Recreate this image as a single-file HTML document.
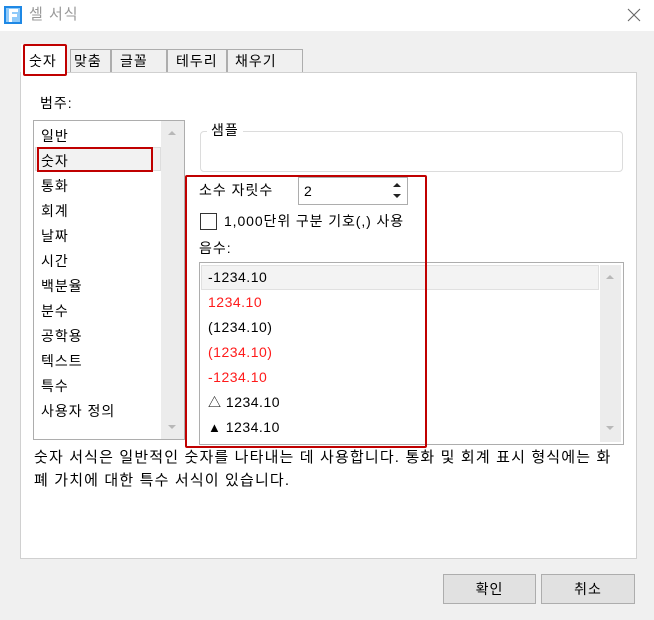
<!DOCTYPE html><html><head><meta charset="utf-8"><style>
*{margin:0;padding:0;box-sizing:border-box}
body{width:654px;height:620px;background:#f0f0f0;position:relative;overflow:hidden;font-family:"Liberation Sans","Noto Sans CJK KR",sans-serif;font-size:14px;color:#000;letter-spacing:1px}
.a{position:absolute;white-space:nowrap}
.t{line-height:20px}
</style></head><body>
<div class="a" style="left:0;top:0;width:654px;height:31px;background:#fff"></div>
<svg class="a" style="left:4px;top:6px" width="18" height="18"><rect x="0" y="0" width="18" height="18" fill="#1e88e5"/><rect x="2" y="2" width="14" height="14" fill="#90caf9"/><path d="M5 3h9v3H8v2h5v3H8v5H5z" fill="#fff"/></svg>
<div class="a t" style="left:29px;top:5px;color:#999;font-size:15px">셀 서식</div>
<svg class="a" style="left:627px;top:8px" width="14" height="14"><path d="M1 1L13 13M13 1L1 13" stroke="#666" stroke-width="1.1"/></svg>
<div class="a" style="left:70px;top:49px;width:41px;height:24px;border:1px solid #adadad;background:#f0f0f0"></div>
<div class="a t" style="left:74px;top:51px">맞춤</div>
<div class="a" style="left:111px;top:49px;width:56px;height:24px;border:1px solid #adadad;background:#f0f0f0"></div>
<div class="a t" style="left:120px;top:51px">글꼴</div>
<div class="a" style="left:167px;top:49px;width:60px;height:24px;border:1px solid #adadad;background:#f0f0f0"></div>
<div class="a t" style="left:176px;top:51px">테두리</div>
<div class="a" style="left:227px;top:49px;width:76px;height:24px;border:1px solid #adadad;background:#f0f0f0"></div>
<div class="a t" style="left:235px;top:51px">채우기</div>
<div class="a" style="left:20px;top:72px;width:617px;height:487px;background:#fff;border:1px solid #d0d0d0"></div>
<div class="a" style="left:21px;top:44px;width:46px;height:30px;background:#fff"></div>
<div class="a" style="left:23px;top:44px;width:44px;height:32px;border:2px solid #c00000;border-radius:2px"></div>
<div class="a t" style="left:29px;top:51px">숫자</div>
<div class="a t" style="left:40px;top:93px">범주:</div>
<div class="a" style="left:33px;top:120px;width:152px;height:320px;border:1px solid #adadad;background:#fff"></div>
<div class="a" style="left:161px;top:121px;width:23px;height:318px;background:#ececec"></div>
<svg class="a" style="left:166px;top:128px" width="12" height="8"><path d="M2 7L6 3L10 7z" fill="#b8b8b8"/></svg>
<svg class="a" style="left:166px;top:424px" width="12" height="8"><path d="M2 1L6 5L10 1z" fill="#b8b8b8"/></svg>
<div class="a" style="left:35px;top:147px;width:126px;height:24px;background:#f2f2f2;border:1px solid #ddd"></div>
<div class="a" style="left:37px;top:147px;width:116px;height:25px;border:2px solid #c00000"></div>
<div class="a t" style="left:41px;top:124px;line-height:25px">일반<br>숫자<br>통화<br>회계<br>날짜<br>시간<br>백분율<br>분수<br>공학용<br>텍스트<br>특수<br>사용자 정의</div>
<div class="a" style="left:200px;top:131px;width:423px;height:41px;border:1px solid #dcdcdc;border-radius:4px"></div>
<div class="a t" style="left:207px;top:120px;background:#fff;padding:0 4px">샘플</div>
<div class="a t" style="left:199px;top:180px">소수 자릿수</div>
<div class="a" style="left:298px;top:177px;width:110px;height:28px;border:1px solid #adadad;background:#fff"></div>
<div class="a t" style="left:304px;top:181px">2</div>
<svg class="a" style="left:392px;top:181px" width="10" height="20"><path d="M1 6L5 2L9 6z M1 13L5 17L9 13z" fill="#222"/></svg>
<div class="a" style="left:200px;top:213px;width:17px;height:17px;border:1px solid #333;background:#fff"></div>
<div class="a t" style="left:224px;top:211px;letter-spacing:0.9px">1,000단위 구분 기호(,) 사용</div>
<div class="a t" style="left:199px;top:238px">음수:</div>
<div class="a" style="left:199px;top:262px;width:425px;height:183px;border:1px solid #adadad;background:#fff"></div>
<div class="a" style="left:600px;top:265px;width:21px;height:177px;background:#ececec"></div>
<svg class="a" style="left:604px;top:272px" width="12" height="8"><path d="M2 7L6 3L10 7z" fill="#b8b8b8"/></svg>
<svg class="a" style="left:604px;top:425px" width="12" height="8"><path d="M2 1L6 5L10 1z" fill="#b8b8b8"/></svg>
<div class="a" style="left:201px;top:265px;width:398px;height:25px;background:#f3f3f3;border:1px solid #e0e0e0"></div>
<div class="a t" style="left:208px;top:265px;line-height:25px;letter-spacing:0.5px">-1234.10<br><span style="color:#ff1a1a">1234.10</span><br>(1234.10)<br><span style="color:#ff1a1a">(1234.10)</span><br><span style="color:#ff1a1a">-1234.10</span><br><span style="font-size:13px">△</span> 1234.10<br><span style="font-size:13px">▲</span> 1234.10</div>
<div class="a" style="left:185px;top:175px;width:242px;height:273px;border:2px solid #c00000;border-radius:2px"></div>
<div class="a" style="left:34px;top:446px;line-height:23px;font-size:15px;letter-spacing:1.15px">숫자 서식은 일반적인 숫자를 나타내는 데 사용합니다. 통화 및 회계 표시 형식에는 화<br>폐 가치에 대한 특수 서식이 있습니다.</div>
<div class="a" style="left:443px;top:574px;width:93px;height:30px;border:1px solid #adadad;background:#e1e1e1;text-align:center;line-height:28px">확인</div>
<div class="a" style="left:541px;top:574px;width:94px;height:30px;border:1px solid #adadad;background:#e1e1e1;text-align:center;line-height:28px">취소</div>
</body></html>
